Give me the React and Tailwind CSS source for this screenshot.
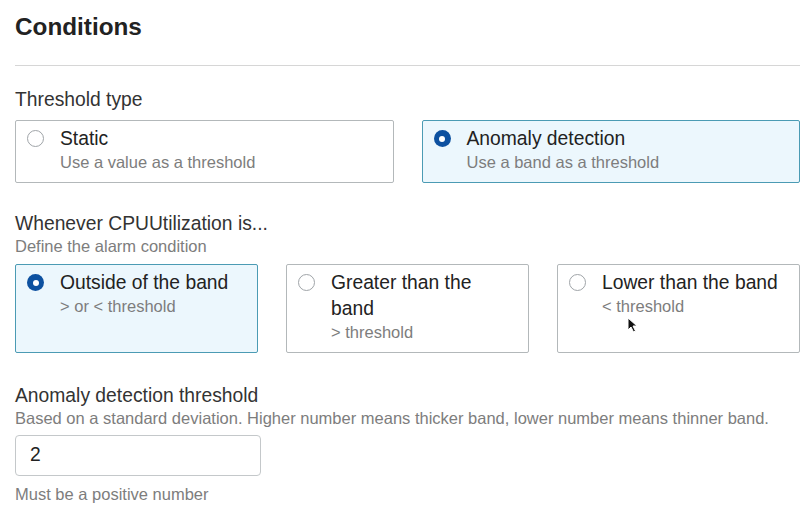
import React from "react";

function Radio({ checked }) {
  if (checked) {
    return (
      <span className="mt-[4px] flex h-[17px] w-[17px] shrink-0 items-center justify-center rounded-full bg-[#0d51a0]">
        <span className="h-[6px] w-[6px] rounded-full bg-white" />
      </span>
    );
  }
  return (
    <span className="mt-[4px] block h-[17px] w-[17px] shrink-0 rounded-full border-[1.5px] border-[#9fa4a8] bg-white" />
  );
}

function Option({ checked, title, sub, children }) {
  return (
    <div
      className={
        "relative flex items-start gap-[16px] rounded-[2px] border pl-[11px] pr-[14px] pt-[5px] pb-[9px] " +
        (checked ? "border-[#4b9bb4] bg-[#ecf7fd]" : "border-[#b3b8ba] bg-white")
      }
    >
      <Radio checked={checked} />
      <div className="flex flex-col">
        <div className="text-[19.3px] leading-[26px] text-[#222]">{title}</div>
        <div className="text-[16.5px] leading-[21px] text-[#7d7d7d]">{sub}</div>
      </div>
      {children}
    </div>
  );
}

export default function App() {
  return (
    <div
      className="min-h-[520px] w-[808px] bg-white pl-[15px] pr-[8px] pt-[12px]"
      style={{ fontFamily: '"Liberation Sans", Arial, sans-serif' }}
    >
      <h1 className="text-[24.3px] font-bold leading-[30px] text-[#222]">Conditions</h1>
      <div className="mt-[23px] h-px bg-[#d6d6d6]" />

      <div className="mt-[21px] text-[19.3px] leading-[25px] text-[#333]">Threshold type</div>
      <div className="mt-[8px] grid grid-cols-2 gap-[28px]">
        <Option checked={false} title="Static" sub="Use a value as a threshold" />
        <Option checked={true} title="Anomaly detection" sub="Use a band as a threshold" />
      </div>

      <div className="mt-[28px] text-[19.3px] leading-[25px] text-[#333]">Whenever CPUUtilization is...</div>
      <div className="text-[16.5px] leading-[21px] text-[#7d7d7d]">Define the alarm condition</div>
      <div className="mt-[7px] grid grid-cols-3 gap-[28px]">
        <Option checked={true} title="Outside of the band" sub="> or < threshold" />
        <Option checked={false} title="Greater than the band" sub="> threshold" />
        <Option checked={false} title="Lower than the band" sub="< threshold">
          <svg
            className="absolute left-[69px] top-[52px]"
            width="11"
            height="16"
            viewBox="0 0 11 16"
          >
            <path d="M1 1 L1 13 L4 10 L6.5 15 L8.5 14 L6 9 L10 9 Z" fill="#111" stroke="#fff" strokeWidth="1" />
          </svg>
        </Option>
      </div>

      <div className="mt-[30px] text-[19.3px] leading-[25px] text-[#333]">Anomaly detection threshold</div>
      <div className="text-[16.5px] leading-[21px] text-[#7d7d7d]">
        Based on a standard deviation. Higher number means thicker band, lower number means thinner band.
      </div>
      <div className="mt-[6px] flex h-[41px] w-[246px] items-center rounded-[4px] border border-[#c4c8ca] bg-white px-[14px] text-[19.3px] text-[#222]">
        2
      </div>
      <div className="mt-[8px] text-[16.5px] leading-[21px] text-[#7d7d7d]">Must be a positive number</div>
    </div>
  );
}
